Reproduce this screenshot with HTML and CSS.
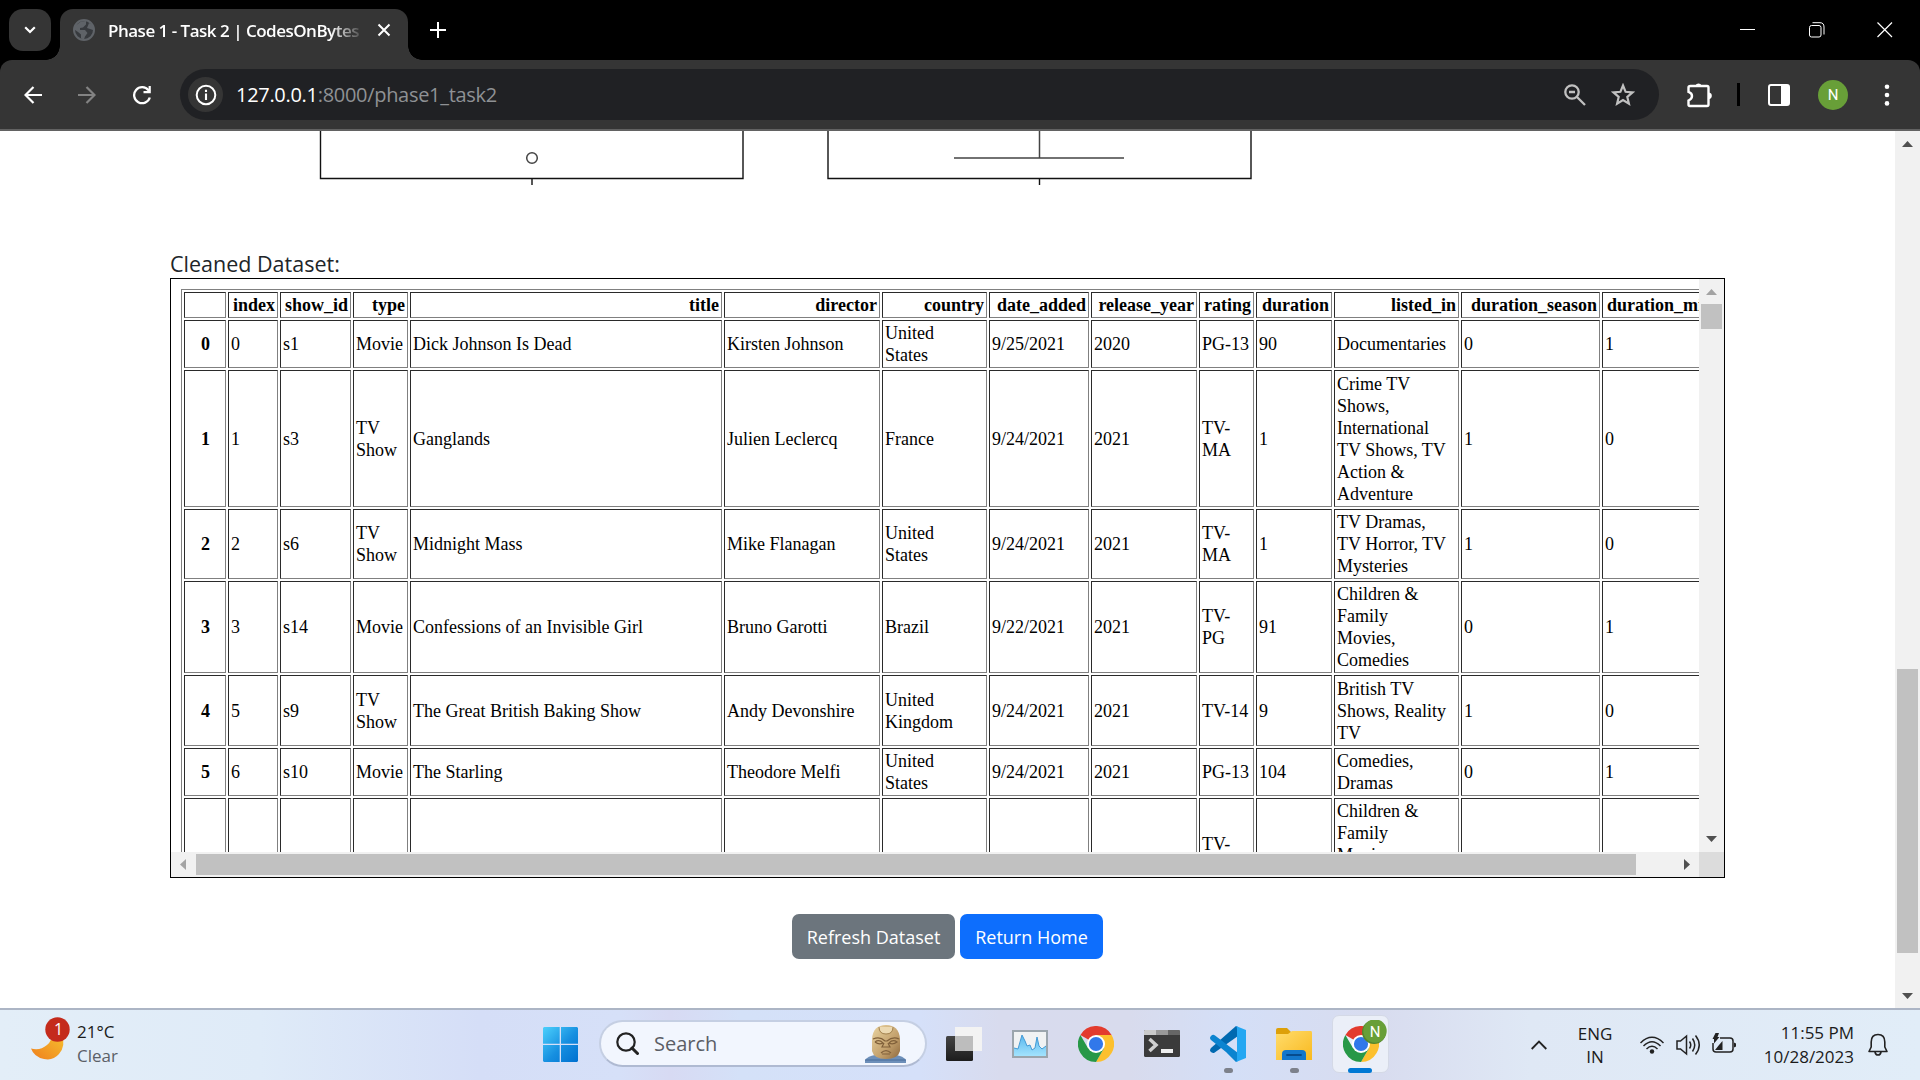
FILE: index.html
```
<!DOCTYPE html>
<html lang="en">
<head>
<meta charset="utf-8">
<title>Phase 1 - Task 2 | CodesOnBytes</title>
<link rel="stylesheet" href="styles.css">
</head>
<body>
<svg width="0" height="0" class="defs" aria-hidden="true">
  <symbol id="chrome" viewBox="0 0 36 36">
    <path d="M18 18L2.4 9A18 18 0 0 1 33.6 9Z" fill="#e33b2e"/>
    <path d="M18 9H33.6A18 18 0 0 1 18 36L25.8 22.500Z" fill="#fcc02e"/>
    <path d="M2.400 9A18 18 0 0 0 18 36L25.800 22.500L18 18L10.200 22.500Z" fill="#279847"/>
    <circle cx="18" cy="18" r="9" fill="#fff"/>
    <circle cx="18" cy="18" r="7.100" fill="#3178ea"/>
  </symbol>
</svg>

<header class="tabstrip">
  <div class="tab-search"><svg width="12" height="8" viewBox="0 0 12 8"><path d="M1.200 1.200L6 6L10.800 1.200" fill="none" stroke="#fff" stroke-width="2.200"/></svg></div>
  <div class="tab">
    <svg class="favicon" width="22" height="22" viewBox="0 0 22 22"><circle cx="11" cy="11" r="10" fill="#373a3e" stroke="#5f6368" stroke-width="2"/><path d="M8 2.500L13 2V5.500L10 8.500L7 9V11H12L14.500 14L12 17.500L11 20.500L8 19.500V15.500L5 13L2 11L2 7Z M14 9L20 11V6L16 4Z" fill="#5f6368"/></svg>
    <span class="tab-title">Phase 1 - Task 2 | CodesOnBytes</span>
    <svg class="tab-close" width="14" height="14" viewBox="0 0 14 14"><path d="M1.500 1.500L12.500 12.500M12.500 1.500L1.500 12.500" stroke="#fff" stroke-width="2"/></svg>
  </div>
  <svg class="new-tab" width="16" height="16" viewBox="0 0 16 16"><path d="M8 0V16M0 8H16" stroke="#fff" stroke-width="2"/></svg>
  <div class="window-controls">
    <svg width="16" height="16" viewBox="0 0 16 16"><path d="M0 7.500H15" stroke="#fff"/></svg>
    <svg width="16" height="16" viewBox="0 0 16 16"><rect x=".5" y="3.500" width="11.500" height="11.500" rx="2" fill="none" stroke="#fff"/><path d="M3.500 .7H11Q15 .7 15 5V12.500" fill="none" stroke="#fff"/></svg>
    <svg width="16" height="16" viewBox="0 0 16 16"><path d="M.5 .5L15 15M15 .5L.5 15" stroke="#fff" stroke-width="1.200"/></svg>
  </div>
</header>

<nav class="toolbar">
  <div class="nav-buttons">
    <svg width="18" height="18" viewBox="0 0 18 18"><path d="M18 9H2M9.500 1L1.500 9L9.500 17" fill="none" stroke="#fff" stroke-width="2.200"/></svg>
    <svg width="18" height="18" viewBox="0 0 18 18"><path d="M0 9H16M8.500 1L16.500 9L8.500 17" fill="none" stroke="#838383" stroke-width="2.200"/></svg>
    <svg width="20" height="20" viewBox="0 0 20 20"><path d="M17.800 12.500A8 8 0 1 1 16.500 5.300L17.500 6.500" fill="none" stroke="#fff" stroke-width="2.300"/><path d="M18.800 1V8.200H11.500V6H16.600V1Z" fill="#fff"/></svg>
  </div>
  <div class="omnibox">
    <span class="site-info"><svg width="22" height="22" viewBox="0 0 22 22"><circle cx="11" cy="11" r="9.300" fill="none" stroke="#fff" stroke-width="2"/><path d="M11 9.500V16M11 5.800V8" stroke="#fff" stroke-width="2.100"/></svg></span>
    <span class="url"><b>127.0.0.1</b>:8000/phase1_task2</span>
    <svg class="zoom-icon" width="22" height="22" viewBox="0 0 22 22"><circle cx="8" cy="8" r="6.700" fill="none" stroke="#c0c0c0" stroke-width="2.300"/><path d="M5 8H11M13 13L21 21" stroke="#c0c0c0" stroke-width="2.300"/></svg>
    <svg class="star-icon" width="24" height="23" viewBox="0 0 24 23"><path d="M12 2.500L14.600 8.800L21.500 9.400L16.300 13.900L17.900 20.600L12 17L6.100 20.600L7.700 13.900L2.500 9.400L9.400 8.800Z" fill="none" stroke="#c0c0c0" stroke-width="2.200"/></svg>
  </div>
  <div class="toolbar-right">
    <svg width="26" height="26" viewBox="0 0 26 26"><path d="M3.500 4H20Q21.500 4 21.500 5.500V22.500Q21.500 24 20 24H3Q1.500 24 1.500 22.500V18.500Q5 17 5 14Q5 11 1.500 9.800V5.500Q1.500 4 3.500 4Z" fill="none" stroke="#fff" stroke-width="2.400"/><path d="M8.500 3.500A3.200 3.200 0 0 1 14.500 3.500ZM22 10.500A3.400 3.400 0 0 1 22 17.200Z" fill="#fff"/></svg>
    <span class="divider"></span>
    <svg width="22" height="22" viewBox="0 0 22 22"><rect x="1" y="1" width="20" height="20" rx="2" fill="none" stroke="#fff" stroke-width="2"/><path d="M13 1H21V21H13Z" fill="#fff"/></svg>
    <span class="avatar">N</span>
    <svg width="6" height="22" viewBox="0 0 6 22"><g fill="#fff"><circle cx="3" cy="2.700" r="2.300"/><circle cx="3" cy="11" r="2.300"/><circle cx="3" cy="19.400" r="2.300"/></g></svg>
  </div>
</nav>

<div class="browser-view">
  <main class="page">
    <svg class="plots" width="1104" height="56" viewBox="0 0 1104 56">
      <g fill="none" stroke="#111" stroke-width="1.400">
        <path d="M150.500 0V47.500H573V0M362 48V54"/>
        <path d="M658 0V47.500H1081V0M869.500 48V54"/>
      </g>
      <g fill="none" stroke="#444" stroke-width="1.500"><circle cx="362" cy="27" r="5.300"/><path d="M869.500 0V27M784 27H954"/></g>
    </svg>
    <h5 class="heading">Cleaned Dataset:</h5>
    <section class="dataset">
      <div class="dataset-row">
        <div class="viewport">
          <table class="dataframe">
            <colgroup><col class="c-row"><col class="c-index"><col class="c-show"><col class="c-type"><col class="c-title"><col class="c-director"><col class="c-country"><col class="c-date"><col class="c-year"><col class="c-rating"><col class="c-duration"><col class="c-listed"><col class="c-season"><col class="c-minute"></colgroup>
            <thead><tr class="r-head"><th></th><th>index</th><th>show_id</th><th>type</th><th>title</th><th>director</th><th>country</th><th>date_added</th><th>release_year</th><th>rating</th><th>duration</th><th>listed_in</th><th>duration_season</th><th>duration_minute</th></tr></thead>
            <tbody>
              <tr class="r2"><th>0</th><td>0</td><td>s1</td><td>Movie</td><td>Dick Johnson Is Dead</td><td>Kirsten Johnson</td><td>United<br>States</td><td>9/25/2021</td><td>2020</td><td>PG-13</td><td>90</td><td>Documentaries</td><td>0</td><td>1</td></tr>
              <tr class="r6"><th>1</th><td>1</td><td>s3</td><td>TV<br>Show</td><td>Ganglands</td><td>Julien Leclercq</td><td>France</td><td>9/24/2021</td><td>2021</td><td>TV-<br>MA</td><td>1</td><td>Crime TV<br>Shows,<br>International<br>TV Shows, TV<br>Action &amp;<br>Adventure</td><td>1</td><td>0</td></tr>
              <tr class="r3"><th>2</th><td>2</td><td>s6</td><td>TV<br>Show</td><td>Midnight Mass</td><td>Mike Flanagan</td><td>United<br>States</td><td>9/24/2021</td><td>2021</td><td>TV-<br>MA</td><td>1</td><td>TV Dramas,<br>TV Horror, TV<br>Mysteries</td><td>1</td><td>0</td></tr>
              <tr class="r4"><th>3</th><td>3</td><td>s14</td><td>Movie</td><td>Confessions of an Invisible Girl</td><td>Bruno Garotti</td><td>Brazil</td><td>9/22/2021</td><td>2021</td><td>TV-<br>PG</td><td>91</td><td>Children &amp;<br>Family<br>Movies,<br>Comedies</td><td>0</td><td>1</td></tr>
              <tr class="r3b"><th>4</th><td>5</td><td>s9</td><td>TV<br>Show</td><td>The Great British Baking Show</td><td>Andy Devonshire</td><td>United<br>Kingdom</td><td>9/24/2021</td><td>2021</td><td>TV-14</td><td>9</td><td>British TV<br>Shows, Reality<br>TV</td><td>1</td><td>0</td></tr>
              <tr class="r2"><th>5</th><td>6</td><td>s10</td><td>Movie</td><td>The Starling</td><td>Theodore Melfi</td><td>United<br>States</td><td>9/24/2021</td><td>2021</td><td>PG-13</td><td>104</td><td>Comedies,<br>Dramas</td><td>0</td><td>1</td></tr>
              <tr class="r5"><th></th><td></td><td></td><td></td><td></td><td></td><td></td><td></td><td></td><td>TV-<br>Y7</td><td></td><td>Children &amp;<br>Family<br>Movies,<br>Comedies<br>&nbsp;</td><td></td><td></td></tr>
            </tbody>
          </table>
        </div>
        <div class="vbar inner">
          <svg width="11" height="6" viewBox="0 0 11 6"><path d="M5.500 0L11 6H0Z" fill="#a3a3a3"/></svg>
          <span class="thumb"></span>
          <svg class="down" width="11" height="6" viewBox="0 0 11 6"><path d="M0 0H11L5.500 6Z" fill="#505050"/></svg>
        </div>
      </div>
      <div class="dataset-foot">
        <div class="hbar">
          <svg width="6" height="11" viewBox="0 0 6 11"><path d="M6 0V11L0 5.500Z" fill="#a3a3a3"/></svg>
          <span class="thumb"></span>
          <svg class="right" width="6" height="11" viewBox="0 0 6 11"><path d="M0 0L6 5.500L0 11Z" fill="#505050"/></svg>
        </div>
        <span class="corner"></span>
      </div>
    </section>
    <div class="actions"><a class="btn secondary"><span>Refresh Dataset</span></a><a class="btn primary"><span>Return Home</span></a></div>
  </main>
  <div class="vbar outer">
    <svg width="11" height="6" viewBox="0 0 11 6"><path d="M5.500 0L11 6H0Z" fill="#505050"/></svg>
    <span class="thumb"></span>
    <svg class="down" width="11" height="6" viewBox="0 0 11 6"><path d="M0 0H11L5.500 6Z" fill="#505050"/></svg>
  </div>
</div>

<footer class="taskbar">
  <div class="weather">
    <svg width="40" height="46" viewBox="0 0 40 46"><defs><linearGradient id="moon" x1="1" y1="0" x2="0" y2="1"><stop offset="0" stop-color="#f6c02f"/><stop offset="1" stop-color="#ef7f1e"/></linearGradient></defs><path d="M1 31.500Q10 34 17 28Q22 24 22 17L32 18Q36 29 29 37Q23 44 14 42Q4 40 1 31.500Z" fill="url(#moon)"/><circle cx="27.500" cy="12.500" r="12.200" fill="#c42b1c"/><text x="28.500" y="18.200" text-anchor="middle" class="badge-text">1</text></svg>
    <div class="weather-text"><div>21°C</div><div class="muted">Clear</div></div>
  </div>
  <div class="apps">
    <svg class="start" width="35" height="35" viewBox="0 0 35 35"><defs><linearGradient id="win" x1="0" y1="0" x2="1" y2="1"><stop offset="0" stop-color="#4cd0fc"/><stop offset=".55" stop-color="#168fe0"/><stop offset="1" stop-color="#0070d0"/></linearGradient></defs><path d="M1 0H16.700V16.700H0V1ZM18 0H34L35 1V16.700H18ZM0 18H16.700V35H1L0 34ZM18 18H35V34L34 35H18Z" fill="url(#win)"/></svg>
    <div class="search">
      <svg class="glass" width="23" height="23" viewBox="0 0 23 23"><circle cx="10" cy="10" r="8.700" fill="none" stroke="#222" stroke-width="2.200"/><path d="M16 16L21.500 21.500" stroke="#222" stroke-width="3" stroke-linecap="round"/></svg>
      <span>Search</span>
      <svg class="statue" width="41" height="38" viewBox="0 0 41 38"><defs><linearGradient id="stone" x1="0" y1="0" x2="1" y2="1"><stop offset="0" stop-color="#ead5a2"/><stop offset=".6" stop-color="#c3a06c"/><stop offset="1" stop-color="#8e693e"/></linearGradient></defs><path d="M0 38V35Q3 31 10 30H31Q38 31 41 35V38Z" fill="#6d8fb9"/><path d="M0 35H41" stroke="#486d9b"/><path d="M7 14Q8 0 21 0Q34 0 35 14V26Q33 34 21 34Q9 34 7 26Z" fill="url(#stone)"/><path d="M14 2Q14 9 21 9Q28 9 28 2" fill="#ecd9b1" stroke="#a2814e"/><path d="M8 14Q15 11 20 16H22Q28 11 34 14M10 17Q14 14 18 18Q14 20 10 17M24 18Q28 14 32 17Q28 20 24 18M19 18L17 22H25L23 18M16 28Q21 23 26 28M17 29H25" fill="none" stroke="#80603a" stroke-width="1.200"/></svg>
    </div>
    <svg class="app" width="36" height="36" viewBox="0 0 36 36"><defs><linearGradient id="dk" x1="0" y1="0" x2="0" y2="1"><stop offset="0" stop-color="#444"/><stop offset="1" stop-color="#1c1c1c"/></linearGradient></defs><rect x="0" y="10" width="27" height="25" rx="1.500" fill="url(#dk)"/><path d="M9 1H36V25H9Z" fill="#f3f3f3"/><path d="M9 10H27V25H9Z" fill="#bdbdbd"/></svg>
    <svg class="app" width="36" height="36" viewBox="0 0 36 36"><defs><linearGradient id="gr" x1="0" y1="0" x2="0" y2="1"><stop offset="0" stop-color="#58b7ee"/><stop offset="1" stop-color="#a3e3fd"/></linearGradient></defs><rect x="1" y="5" width="34" height="26" fill="#f0f2f3" stroke="#9ba5ad" stroke-width="2"/><path d="M2 30V22L6 23L8 17L10 9L13 15L15 20L18 19L20 24L23 22L25 11L27 20L30 23L34 20V30Z" fill="url(#gr)"/><path d="M2 22L6 23L10 9L13 15L15 20L18 19L20 24L23 22L25 11L27 20L30 23L34 20" fill="none" stroke="#439ad5"/></svg>
    <svg class="app" width="36" height="36"><use href="#chrome"/></svg>
    <svg class="app" width="36" height="36" viewBox="0 0 36 36"><rect y="4" width="36" height="27" rx="1.500" fill="#3b3b3b"/><path d="M1 4H12V9H0V5Z" fill="#cbcbcb"/><path d="M12 4H24V9H12Z" fill="#999"/><path d="M24 4H35L36 5V9H24Z" fill="#666"/><path d="M5.500 13L12 19L5.500 25" fill="none" stroke="#d0d0d0" stroke-width="3.500"/><path d="M17 23H29V27H17Z" fill="#eee"/></svg>
    <div class="app running"><svg width="36" height="36" viewBox="0 0 36 36"><path d="M1 22L26 0L28 1V10L4 27Q2 27.500 0 25Q0 23 1 22Z" fill="#0069b0"/><path d="M1 14Q-1 12 1 10Q3 8 5 9.500L28 27V35L26 36L16 26Z" fill="#0b84d0"/><path d="M26 0L36 4V32L26 36Q27 35 27 33V3Q27 1 26 0Z" fill="#24a7f2"/></svg></div>
    <div class="app running"><svg width="36" height="36" viewBox="0 0 36 36"><defs><linearGradient id="fo" x1="0" y1="0" x2="1" y2="1"><stop offset="0" stop-color="#ffdc6c"/><stop offset="1" stop-color="#f9b91f"/></linearGradient></defs><path d="M0 4Q0 2 2 2H11L15 6V10H0Z" fill="#dda009"/><path d="M0 8H12L16 5H35Q36 5 36 7V34H0Z" fill="url(#fo)"/><path d="M6 34V28Q6 24 10 24H26Q30 24 30 28V34Z" fill="#1377cb"/><path d="M11 29H25" stroke="#064b8d" stroke-width="1.800" stroke-linecap="round"/></svg></div>
    <div class="app running active"><svg width="48" height="42" viewBox="0 0 48 42"><use href="#chrome" x="4" y="6" width="36" height="36"/><circle cx="35" cy="12" r="12" fill="#55852e"/><circle cx="36" cy="11" r="11.700" fill="#689f38"/><text x="36" y="17" text-anchor="middle" class="badge-n">N</text></svg></div>
  </div>
  <div class="tray">
    <svg class="chev" width="16" height="10" viewBox="0 0 16 10"><path d="M.7 9L8 1.500L15.300 9" fill="none" stroke="#222" stroke-width="1.800"/></svg>
    <div class="lang"><div>ENG</div><div>IN</div></div>
    <svg class="wifi" width="24" height="24" viewBox="0 0 24 24"><g fill="none" stroke="#222" stroke-width="1.500"><path d="M.5 10Q12-1.500 23.500 10M3.500 13Q12 4.500 20.500 13M6.500 16Q12 10.500 17.500 16"/></g><circle cx="12" cy="18.500" r="2.200" fill="#222"/></svg>
    <svg class="vol" width="25" height="24" viewBox="0 0 25 24"><g fill="none" stroke="#222" stroke-width="1.500"><path d="M1 8H4.500L10.500 3V21L4.500 16H1Z"/><path d="M13.500 8.500Q16 12 13.500 15.500M16.500 5.500Q21 12 16.500 18.500M19.500 2.500Q27 12 19.500 21.500"/></g></svg>
    <svg class="batt" width="25" height="24" viewBox="0 0 25 24"><path d="M8 5H18Q21 5 21 8V16Q21 19 18 19H4Q1 19 1 16V10" fill="none" stroke="#222" stroke-width="1.500"/><path d="M22 9.500L24 10.500V13.500L22 14.500ZM10.500 8V17H3L7 12ZM3.500 0L7 0L5.500 4H7.500L2 10.500V6H.5Z" fill="#222"/></svg>
    <div class="clock"><div>11:55 PM</div><div>10/28/2023</div></div>
    <svg class="bell" width="20" height="24" viewBox="0 0 20 24"><path d="M1 18.500L3.200 14V9Q3.200 1.500 10 1.500Q16.800 1.500 16.800 9V14L19 18.500ZM7 19Q7.500 22 10 22Q12.500 22 13 19" fill="none" stroke="#222" stroke-width="1.600" stroke-linejoin="round"/></svg>
  </div>
</footer>
</body>
</html>
```
FILE: styles.css
```
* { box-sizing: border-box; }
body {
  margin: 0;
  width: 1920px;
  height: 1080px;
  overflow: hidden;
  display: flex;
  flex-direction: column;
  background: #000;
  font-family: "Open Sans", "Noto Sans", sans-serif;
}
svg { display: block; flex: none; }
.defs { position: absolute; }

/* Tab strip */
.tabstrip { height: 60px; display: flex; align-items: flex-start; padding: 9px 27px 0 9px; }
.tab-search { width: 42px; height: 42px; border-radius: 14px; background: #353535; display: grid; place-items: center; }
.tab {
  position: relative;
  width: 348px;
  height: 51px;
  margin-left: 9px;
  padding: 0 17px 9px 13px;
  border-radius: 13px 13px 0 0;
  background: #353535;
  display: flex;
  align-items: center;
}
.tab::before, .tab::after { content: ""; position: absolute; bottom: 0; width: 14px; height: 14px; }
.tab::before { left: -14px; background: radial-gradient(circle at 0 0, transparent 13.500px, #353535 14px); }
.tab::after { right: -14px; background: radial-gradient(circle at 100% 0, transparent 13.500px, #353535 14px); }
.tab-title {
  width: 252px;
  margin-left: 13px;
  overflow: hidden;
  white-space: nowrap;
  color: #fff;
  font-size: 17px;
  font-weight: 600;
  letter-spacing: -0.500px;
  -webkit-mask-image: linear-gradient(90deg, #000 88%, transparent 102%);
  mask-image: linear-gradient(90deg, #000 88%, transparent 102%);
}
.tab-close { margin-left: auto; }
.new-tab { margin: 13px 0 0 22px; }
.window-controls { margin: 13px 0 0 auto; display: flex; gap: 52.500px; }

/* Toolbar */
.toolbar {
  height: 71px;
  padding: 9px 30px 9px 24px;
  border-bottom: 2px solid #626262;
  border-radius: 12px 12px 0 0;
  background: #353535;
  display: flex;
  align-items: center;
}
.nav-buttons { width: 156px; display: flex; align-items: center; gap: 36px; }
.omnibox { width: 1479px; height: 51px; border-radius: 26px; background: #202124; display: flex; align-items: center; padding: 0 24px 0 8px; }
.site-info { width: 35px; height: 35px; border-radius: 50%; background: #353535; display: grid; place-items: center; }
.url { margin-left: 13px; color: #8f9194; font-size: 20px; letter-spacing: -0.300px; }
.url b { color: #fff; font-weight: 400; }
.zoom-icon { margin-left: auto; margin-right: 25px; }
.toolbar-right { flex: 1; margin-left: 28px; display: flex; align-items: center; }
.divider { width: 3px; height: 23px; margin: 0 28px 0 24px; background: #000; }
.avatar { width: 30px; height: 30px; margin: 0 36px 0 28px; border-radius: 50%; background: #689f38; color: #fff; display: grid; place-items: center; font: 15px Roboto, sans-serif; }

/* Page */
.browser-view { height: 877px; display: flex; background: #fff; }
.page { width: 1895px; padding-left: 170px; }
.heading { margin: 62px 0 0; height: 29px; line-height: 29px; font-size: 21.500px; font-weight: 400; color: #212529; }
.dataset { width: 1555px; height: 600px; border: 1px solid #000; }
.dataset-row { display: flex; height: 573px; }
.viewport { width: 1528px; padding: 10px; overflow: hidden; }
.dataframe {
  table-layout: fixed;
  width: 1562px;
  border: 1px solid #808080;
  border-spacing: 2px;
  border-collapse: separate;
  font: 18px/22px "Liberation Serif", "Times New Roman", serif;
  color: #000;
}
.dataframe th, .dataframe td { padding: 1px 1px 1px 2px; border: 1px solid; border-color: #2a2a2a #808080 #808080 #2a2a2a; text-align: left; white-space: nowrap; vertical-align: middle; }
.dataframe thead th { text-align: right; padding: 1px 2px 1px 1px; }
.dataframe tbody th { text-align: center; }
.c-row { width: 42px; } .c-index { width: 50px; } .c-show { width: 71px; } .c-type { width: 55px; }
.c-title { width: 312px; } .c-director { width: 156px; } .c-country { width: 105px; } .c-date { width: 100px; }
.c-year { width: 106px; } .c-rating { width: 55px; } .c-duration { width: 76px; } .c-listed { width: 125px; }
.c-season { width: 139px; } .c-minute { width: 138px; }
.r-head { height: 26px; } .r2 { height: 48px; } .r6 { height: 137px; } .r3 { height: 70px; }
.r4 { height: 92px; } .r3b { height: 71px; } .r5 { height: 114px; }

/* Scrollbars */
.vbar { width: 25px; background: #f1f1f1; display: flex; flex-direction: column; align-items: center; padding-top: 10px; }
.vbar .thumb { width: 21px; background: #c1c1c1; }
.vbar .down { margin-top: auto; }
.inner { padding-bottom: 10px; }
.inner .thumb { height: 25px; margin-top: 9px; }
.outer { padding-bottom: 9px; }
.outer .thumb { height: 284px; margin-top: 522px; }
.dataset-foot { display: flex; height: 25px; }
.hbar { width: 1528px; background: #f1f1f1; display: flex; align-items: center; padding: 0 9px; }
.hbar .thumb { width: 1440px; height: 21px; margin-left: 10px; background: #c1c1c1; }
.hbar .right { margin-left: auto; }
.corner { width: 25px; background: #dcdcdc; }

.actions { width: 1555px; margin-top: 36px; display: flex; justify-content: center; gap: 5px; }
.btn { height: 45px; border-radius: 7px; color: #fff; font-size: 18px; display: flex; align-items: center; justify-content: center; white-space: nowrap; }
.secondary { width: 163px; background: #6c757d; }
.primary { width: 143px; background: #0d6efd; }

/* Taskbar */
.taskbar {
  height: 72px;
  border-top: 2px solid #acb5c5;
  background: linear-gradient(90deg, #e3eef8 0, #dfebf8 260px, #d5def7 480px, #d6e0f8 620px, #d7daf3 670px, #d4e1f8 740px, #d5e0f9 920px, #d8dbee 1000px, #d8dbed 1130px, #d4dff7 1230px, #d8dcef 1380px, #dfe8f5 1530px, #e1edf8 1920px);
  display: flex;
  font-size: 17px;
  color: #1b1b1b;
}
.weather { width: 543px; padding: 7px 0 0 30px; display: flex; gap: 7px; }
.weather-text { padding-top: 3px; line-height: 24px; }
.weather .muted { color: #5b6067; }
.badge-text { fill: #fff; font-size: 16px; }
.badge-n { fill: #fff; font: 15px Roboto, sans-serif; }
.apps { display: flex; align-items: flex-start; padding-top: 16px; gap: 30px; }
.start { margin: 1px 0 0; }
.search { width: 328px; height: 47px; margin: -6px -11px 0 -9px; border: 2px solid #c5cfe3; border-bottom-color: #afbad2; border-radius: 24px; background: #f2f6fe; display: flex; align-items: center; padding: 0 19px 0 15px; font-size: 20px; color: #5b5e66; }
.search span { margin-left: 15px; }
.statue { margin-left: auto; }
.app { width: 36px; height: 36px; }
.running { position: relative; }
.running::after { content: ""; position: absolute; left: 14px; top: 42px; width: 9px; height: 5px; border-radius: 3px; background: #7d818b; }
.active { width: 57px; height: 58px; margin: -11px 0 0 -10px; padding: 4px 0 0 6px; border: 1px solid #d4d9e6; border-radius: 7px; background: #ebeff8; }
.active::after { left: 15px; top: 52px; width: 24px; background: #0078d4; }
.tray { margin-left: auto; padding: 0 32px 0 0; display: flex; align-items: center; }
.lang { width: 50px; margin-left: 23px; text-align: center; line-height: 23px; }
.wifi { margin-left: 20px; }
.vol { margin-left: 12px; }
.batt { margin-left: 11px; }
.clock { width: 117px; text-align: right; line-height: 24px; }
.bell { margin-left: 14px; }
```
